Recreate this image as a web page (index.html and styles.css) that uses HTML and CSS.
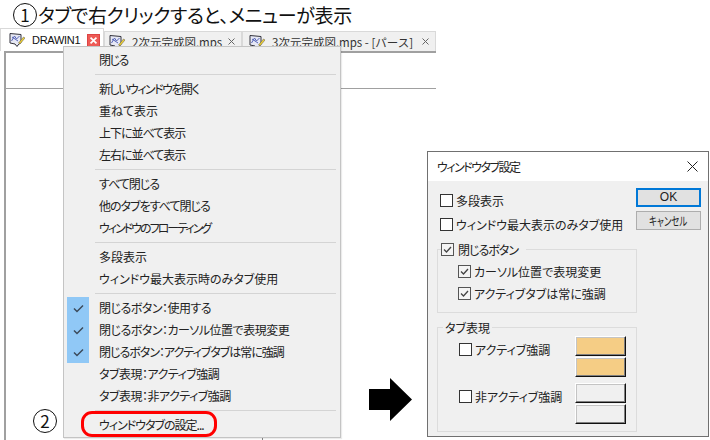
FILE: index.html
```html
<!DOCTYPE html>
<html lang="ja">
<head>
<meta charset="utf-8">
<title>ウィンドウタブ設定</title>
<link rel="stylesheet" href="styles.css">
</head>
<body>
<div class="stage">
  <div class="heading"><span class="num">1</span><span>タブで右クリックすると、メニューが表示</span></div>

  <div class="app">
    <div class="tabs">
      <div class="tab active">
        <svg class="doc" viewBox="0 0 16 16"><path d="M1 1.500l11 1v8l-3 2.500-1 1.500-2-2.500L1 11z" fill="#e6e8f4" stroke="#33333c"/><path d="M2.500 9l3-5 2 3 3-3M3 5l6 4" fill="none" stroke="#5564b8"/><path d="M9.500 11l5-6 1.500 1-5 6z" fill="#f2d230" stroke="#555" stroke-width=".5"/></svg>
        <span class="tab-name strong">DRAWIN1</span>
        <span class="tab-close red"><svg viewBox="0 0 13 13"><path d="M3 3l7 7M10 3l-7 7" stroke="#fff" stroke-width="2"/></svg></span>
      </div>
      <div class="tab two">
        <svg class="doc" viewBox="0 0 16 16"><path d="M1 1.500l11 1v8l-3 2.500-1 1.500-2-2.500L1 11z" fill="#e6e8f4" stroke="#33333c"/><path d="M2.500 9l3-5 2 3 3-3M3 5l6 4" fill="none" stroke="#5564b8"/><path d="M9.500 11l5-6 1.500 1-5 6z" fill="#f2d230" stroke="#555" stroke-width=".5"/></svg>
        <span class="tab-name">2次元完成図.mps</span>
        <svg class="x" viewBox="0 0 7 7"><path d="M.5.5l6 6M6.500.5l-6 6" stroke="#666" fill="none"/></svg>
      </div>
      <div class="tab three">
        <svg class="doc" viewBox="0 0 16 16"><path d="M1 1.500l11 1v8l-3 2.500-1 1.500-2-2.500L1 11z" fill="#e6e8f4" stroke="#33333c"/><path d="M2.500 9l3-5 2 3 3-3M3 5l6 4" fill="none" stroke="#5564b8"/><path d="M9.500 11l5-6 1.500 1-5 6z" fill="#f2d230" stroke="#555" stroke-width=".5"/></svg>
        <span class="tab-name">3次元完成図.mps - [パース]</span>
        <svg class="x" viewBox="0 0 7 7"><path d="M.5.5l6 6M6.500.5l-6 6" stroke="#666" fill="none"/></svg>
      </div>
    </div>
    <div class="frame"><div class="inner-line"></div></div>
  </div>
  <div class="bottom-tick"></div>

  <div class="menu">
    <div class="item tight-l">閉じる</div>
    <div class="sep"></div>
    <div class="item tight-l">新しいウィンドウを開く</div>
    <div class="item">重ねて表示</div>
    <div class="item tight-m">上下に並べて表示</div>
    <div class="item tight-m">左右に並べて表示</div>
    <div class="sep"></div>
    <div class="item tight-m">すべて閉じる</div>
    <div class="item tight-m">他のタブをすべて閉じる</div>
    <div class="item tight-x">ウィンドウのフローティング</div>
    <div class="sep"></div>
    <div class="item">多段表示</div>
    <div class="item">ウィンドウ最大表示時のみタブ使用</div>
    <div class="sep"></div>
    <div class="item checked tight-s"><svg class="tick" viewBox="0 0 11 9"><path d="M1 4.500l3 3 6-6" fill="none" stroke="#3c4a5a" stroke-width="1.500"/></svg>閉じるボタン：使用する</div>
    <div class="item checked tight-s"><svg class="tick" viewBox="0 0 11 9"><path d="M1 4.500l3 3 6-6" fill="none" stroke="#3c4a5a" stroke-width="1.500"/></svg>閉じるボタン：カーソル位置で表現変更</div>
    <div class="item checked tight-m"><svg class="tick" viewBox="0 0 11 9"><path d="M1 4.500l3 3 6-6" fill="none" stroke="#3c4a5a" stroke-width="1.500"/></svg>閉じるボタン：アクティブタブは常に強調</div>
    <div class="item tight-s">タブ表現：アクティブ強調</div>
    <div class="item tight-s">タブ表現：非アクティブ強調</div>
    <div class="sep"></div>
    <div class="item tight-m">ウィンドウタブの設定...</div>
  </div>
  <div class="highlight"></div>
  <div class="step2">2</div>

  <svg class="arrow" viewBox="0 0 43 43"><path d="M0 11h21V0l22 21.500L21 43V32H0z" fill="#000"/></svg>

  <div class="dialog">
    <div class="dlg-title">
      <span class="tight-l">ウィンドウタブ設定</span>
      <svg class="dlg-x" viewBox="0 0 11 11"><path d="M.5.5l10 10M10.500.5l-10 10" stroke="#222" fill="none"/></svg>
    </div>
    <div class="dlg-body">
      <div class="dlg-top">
        <div class="opts">
          <div class="chk"><span class="box"></span>多段表示</div>
          <div class="chk"><span class="box"></span>ウィンドウ最大表示のみタブ使用</div>
        </div>
        <div class="btns">
          <div class="btn default">OK</div>
          <div class="btn"><span class="narrow">キャンセル</span></div>
        </div>
      </div>

      <div class="group close-group">
        <div class="legend chk tight-m"><span class="box on"><svg viewBox="0 0 11 11"><path d="M2 5.500l2.500 2.500 4.500-5" fill="none" stroke="#444" stroke-width="1.300"/></svg></span>閉じるボタン</div>
        <div class="chk sub"><span class="box on"><svg viewBox="0 0 11 11"><path d="M2 5.500l2.500 2.500 4.500-5" fill="none" stroke="#444" stroke-width="1.300"/></svg></span>カーソル位置で表現変更</div>
        <div class="chk sub"><span class="box on"><svg viewBox="0 0 11 11"><path d="M2 5.500l2.500 2.500 4.500-5" fill="none" stroke="#444" stroke-width="1.300"/></svg></span>アクティブタブは常に強調</div>
      </div>

      <div class="group style-group">
        <div class="legend plain">タブ表現</div>
        <div class="style-row">
          <div class="chk"><span class="box"></span>アクティブ強調</div>
          <div class="swatches">
            <div class="swatch orange"></div>
            <div class="swatch orange"></div>
          </div>
        </div>
        <div class="style-row">
          <div class="chk"><span class="box"></span>非アクティブ強調</div>
          <div class="swatches">
            <div class="swatch"></div>
            <div class="swatch"></div>
          </div>
        </div>
      </div>
    </div>
  </div>
</div>
</body>
</html>
```
FILE: styles.css
```css
* { box-sizing: border-box; }
html, body { margin: 0; padding: 0; background: #fff; }
body {
  width: 710px;
  height: 440px;
  overflow: hidden;
  font-family: "Noto Sans CJK JP", "Noto Sans", sans-serif;
  font-feature-settings: "palt";
  color: #1a1a1a;
}
.stage { position: relative; width: 710px; height: 440px; overflow: hidden; }

.heading {
  position: absolute;
  left: 13px;
  top: 2px;
  display: flex;
  align-items: center;
  gap: 1px;
  height: 26px;
  font-size: 19px;
  letter-spacing: -.3px;
  line-height: 26px;
  color: #111;
  white-space: nowrap;
}
.num, .step2 {
  width: 24px;
  height: 24px;
  border: 1.500px solid #111;
  border-radius: 50%;
  font-size: 17px;
  letter-spacing: 0;
  line-height: 21px;
  text-align: center;
  flex: none;
  color: #111;
}

.app { position: absolute; left: 0; top: 28px; width: 436px; height: 412px; }
.tabs { display: flex; height: 23px; align-items: flex-end; }
.tab {
  display: flex;
  align-items: center;
  height: 20px;
  background: #f0f0f0;
  border: 1px solid #d9d9d9;
  border-bottom: 0;
  font-size: 11.500px;
  font-feature-settings: normal;
  color: #333;
  white-space: nowrap;
}
.tab.active { width: 104px; height: 23px; background: #fff; padding-left: 8px; color: #111; }
.tab.two { width: 138px; padding-left: 4px; }
.tab.three { width: 194px; padding-left: 6px; }
.doc { width: 16px; height: 16px; flex: none; }
.tab-name { margin-left: 7px; flex: 1; }
.strong { font-family: "Liberation Sans", sans-serif; font-size: 11px; letter-spacing: -.3px; }
.tab-close { width: 13px; height: 13px; background: #ee5a55; margin-right: 3px; display: block; flex: none; border: 1px solid #d44; }
.tab-close svg { display: block; width: 11px; height: 11px; }
.x { width: 7px; height: 7px; margin-right: 6px; flex: none; }
.frame {
  position: relative;
  height: 389px;
  margin-left: 4px;
  border-top: 2px solid #a0a0a0;
  border-left: 2px solid #a0a0a0;
}
.inner-line { position: absolute; left: 0; right: 0; top: 35px; border-top: 1px solid #a0a0a0; }
.bottom-tick { position: absolute; left: 262px; top: 438px; width: 1px; height: 2px; background: #888; }

.menu {
  position: absolute;
  left: 63px;
  top: 46px;
  width: 278px;
  height: 392px;
  padding: 2px 2px;
  background: #f0f0f0;
  border: 1px solid #c4c4c4;
  box-shadow: 1px 1px 1px rgba(0,0,0,.08);
}
.item {
  position: relative;
  height: 22px;
  line-height: 22px;
  padding-left: 33px;
  font-size: 12px;
  color: #222;
  white-space: nowrap;
}
.tight-s { letter-spacing: -.5px; }
.tight-m { letter-spacing: -1px; }
.tight-l { letter-spacing: -1.500px; }
.tight-x { letter-spacing: -2px; }
.sep { height: 1px; margin: 3px 2px 3px 29px; background: #d4d4d4; }
.item.checked::before {
  content: "";
  position: absolute;
  left: 1px;
  top: 0;
  width: 22px;
  height: 22px;
  background: #90c8f6;
}
.tick { position: absolute; left: 7px; top: 7px; width: 11px; height: 9px; z-index: 1; }

.highlight {
  position: absolute;
  left: 81px;
  top: 411px;
  width: 136px;
  height: 26px;
  border: 3px solid #f00;
  border-radius: 11px;
}
.step2 { position: absolute; left: 33px; top: 409px; }

.arrow { position: absolute; left: 369px; top: 378px; width: 43px; height: 43px; }

.dialog {
  position: absolute;
  left: 427px;
  top: 151px;
  width: 282px;
  height: 286px;
  border: 1px solid #707070;
  background: #f0f0f0;
  display: flex;
  flex-direction: column;
}
.dlg-title {
  height: 29px;
  flex: none;
  background: #fff;
  display: flex;
  align-items: center;
  justify-content: space-between;
  padding: 0 10px 0 9px;
  font-size: 12px;
  color: #222;
}
.dlg-x { width: 11px; height: 11px; }
.dlg-body { flex: 1; padding: 7px 7px 0 9px; font-size: 12px; color: #222; }
.dlg-top { display: flex; justify-content: space-between; height: 49px; }
.opts { display: flex; flex-direction: column; gap: 5px; padding: 3px 0 0 3px; }
.chk { display: flex; align-items: center; gap: 3px; height: 19px; white-space: nowrap; }
.box {
  width: 13px;
  height: 13px;
  flex: none;
  background: #fff;
  border: 1px solid #333;
}
.box.on { border-color: #555; background: #f4f4f4; }
.box svg { display: block; width: 11px; height: 11px; }
.btns { display: flex; flex-direction: column; gap: 4px; }
.btn {
  width: 65px;
  height: 19px;
  background: #e1e1e1;
  border: 1px solid #adadad;
  text-align: center;
  font-size: 12px;
  line-height: 17px;
}
.btn.default { border: 2px solid #0078d7; line-height: 15px; font-family: "Liberation Sans", sans-serif; font-size: 12px; }
.narrow { display: inline-block; transform: scaleX(.7); }

.group { position: relative; width: 200px; border: 1px solid #dcdcdc; }
.close-group { height: 64px; margin-top: 12px; padding: 10px 0 0 20px; }
.close-group .sub { height: 22px; }
.legend { position: absolute; background: #f0f0f0; }
.close-group .legend { left: 3px; top: -10px; padding-right: 8px; }
.close-group .legend .box { margin-right: 1px; }
.legend.plain { left: 5px; top: -9px; padding: 0 2px; line-height: 18px; }
.style-group { height: 105px; margin-top: 14px; padding: 8px 10px 0 21px; }
.style-row { display: flex; justify-content: space-between; height: 47px; }
.style-row .chk { margin-top: 4px; }
.swatches { display: flex; flex-direction: column; gap: 1px; }
.swatch {
  width: 51px;
  height: 20px;
  background: #f0f0f0;
  border-top: 1px solid #fff;
  border-left: 1px solid #fff;
  border-right: 1px solid #111;
  border-bottom: 1px solid #111;
  box-shadow: inset -1px -1px 0 #808080, inset 1px 1px 0 #c4c4c4;
}
.swatch.orange { background: #f5cd85; }
```
